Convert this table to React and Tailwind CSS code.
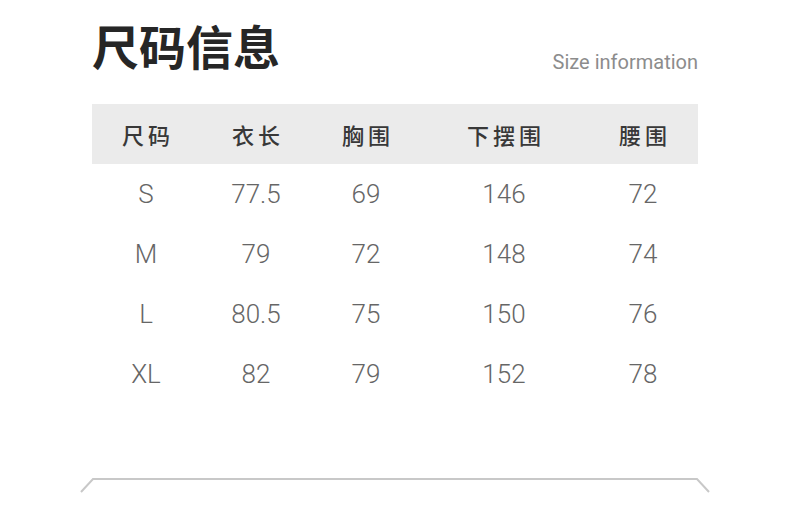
const rows = [
    ['S', '77.5', '69', '146', '72'],
    ['M', '79', '72', '148', '74'],
    ['L', '80.5', '75', '150', '76'],
    ['XL', '82', '79', '152', '78'],
];

const heads = ['尺码', '衣长', '胸围', '下摆围', '腰围'];

const cols = 'grid grid-cols-[108px_112px_108px_168px_110px]';

const App = () => {
    return (
        <div className="w-[790px] h-[530px] bg-white overflow-hidden" style={{ fontFamily: 'Roboto, "Noto Sans CJK SC", sans-serif' }}>
            <div className="mx-auto w-[606px] pt-[22px]">
                <div className="flex items-start justify-between">
                    <h1 className="text-[47px] leading-[46px] font-bold text-[#262626]" style={{ fontFamily: '"Noto Sans CJK SC", sans-serif' }}>
                        尺码信息
                    </h1>
                    <div className="mt-[28px] text-[20px] leading-[24px] text-[#8c8c8c]">Size information</div>
                </div>

                <div className={`${cols} mt-[30px] h-[60px] items-center bg-[#ebebeb]`}>
                    {heads.map(h => (
                        <div key={h} className="text-center text-[22px] font-medium tracking-[4px] pl-[4px] text-[#383838]" style={{ fontFamily: '"Noto Sans CJK SC", sans-serif' }}>
                            {h}
                        </div>
                    ))}
                </div>

                {rows.map(r => (
                    <div key={r[0]} className={`${cols} h-[60px] items-center`}>
                        {r.map((v, i) => (
                            <div key={i} className="text-center text-[26px] font-light text-[#666666]">
                                {v}
                            </div>
                        ))}
                    </div>
                ))}
            </div>

            <svg className="mt-[74px]" width="790" height="20" viewBox="0 0 790 20">
                <polyline points="81,14 93,1 697,1 709,14" fill="none" stroke="#c8c8c8" strokeWidth="2" />
            </svg>
        </div>
    );
};

export default App;
